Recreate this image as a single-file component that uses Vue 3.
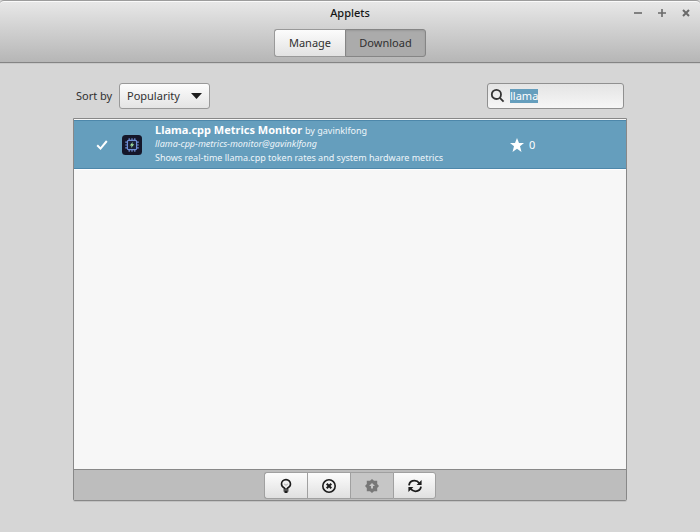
<script setup>
import { ref } from 'vue'

const tab = ref('Download')
const tabs = ['Manage', 'Download']
const sort = ref('Popularity')
const query = ref('llama')
const applets = [
  {
    name: 'Llama.cpp Metrics Monitor',
    author: 'gavinklfong',
    uuid: 'llama-cpp-metrics-monitor@gavinklfong',
    description: 'Shows real-time llama.cpp token rates and system hardware metrics',
    score: 0,
  },
]
</script>

<template>
  <div class="window">
    <header class="header">
      <div class="titlebar">
        <h1 class="title">Applets</h1>
        <div class="controls">
          <button class="control" aria-label="Minimize">
            <svg width="10" height="10" viewBox="0 0 10 10"><path d="M1 5h8" /></svg>
          </button>
          <button class="control" aria-label="Maximize">
            <svg width="10" height="10" viewBox="0 0 10 10"><path d="M1 5h8M5 1v8" /></svg>
          </button>
          <button class="control" aria-label="Close">
            <svg width="10" height="10" viewBox="0 0 10 10"><path class="thick" d="M2 2l6 6M8 2L2 8" /></svg>
          </button>
        </div>
      </div>
      <nav class="tabs">
        <button
          v-for="name in tabs"
          :key="name"
          class="tab"
          :class="{ active: tab === name }"
          @click="tab = name"
        >{{ name }}</button>
      </nav>
    </header>

    <main class="content">
      <div class="toolbar">
        <label class="sort-label" for="sort">Sort by</label>
        <div class="select-box">
          <select id="sort" v-model="sort" class="sort">
            <option>Popularity</option>
          </select>
          <svg class="caret" width="11" height="6" viewBox="0 0 11 6"><path d="M0 0h11L5.5 6z" /></svg>
        </div>
        <label class="search">
          <svg width="16" height="16" viewBox="0 0 16 16">
            <circle cx="6.4" cy="6.4" r="4.6" />
            <path d="M9.8 9.8l3.8 3.8" />
          </svg>
          <span class="field">
            <input v-model="query" class="query" type="text" aria-label="Search" />
          </span>
        </label>
      </div>

      <section class="panel">
        <ul class="list">
          <li v-for="applet in applets" :key="applet.uuid" class="row">
            <svg class="check" width="12" height="12" viewBox="0 0 12 12"><path d="M1.2 6.3l3.3 3.3L10.8 2" /></svg>
            <svg class="logo" width="20" height="20" viewBox="0 0 20 20">
              <rect width="20" height="20" rx="3.5" fill="#15172a" />
              <path
                d="M7.2 3.2v2.6M10 3.2v2.6M12.8 3.2v2.6M7.2 14.2v2.6M10 14.2v2.6M12.8 14.2v2.6M3.2 7.2h2.6M3.2 10h2.6M3.2 12.8h2.6M14.2 7.2h2.6M14.2 10h2.6M14.2 12.8h2.6"
                stroke="#6f8fd6"
                stroke-width="1.2"
              />
              <rect x="5.4" y="5.4" width="9.2" height="9.2" rx="1.2" fill="#1b2138" stroke="#6f8fd6" stroke-width="1.2" />
              <path d="M10.8 7L7.8 10.5h1.8L9.1 13l3.1-3.7h-1.9z" fill="#a4e6a2" />
            </svg>
            <div class="info">
              <div class="name"><strong>{{ applet.name }}</strong> <small>by {{ applet.author }}</small></div>
              <div class="uuid">{{ applet.uuid }}</div>
              <div class="description">{{ applet.description }}</div>
            </div>
            <div class="score">
              <svg width="16" height="16" viewBox="0 0 16 16">
                <path d="M8 1l2 5h5l-4 3.3L12.5 15 8 11.7 3.5 15 5 9.3 1 6h5z" />
              </svg>
              <span>{{ applet.score }}</span>
            </div>
          </li>
        </ul>
        <footer class="actions">
          <button class="action" aria-label="More info">
            <svg width="16" height="16" viewBox="0 0 16 16">
              <path
                d="M6.3 11V9.9C4.600 9.200 3.500 7.900 3.500 6.100a4.500 4.500 0 0 1 9 0c0 1.800-1.100 3.100-2.800 3.800V11z"
                fill="none"
                stroke="#1c1c1c"
                stroke-width="1.600"
              />
              <path d="M6.200 6l1.800 1.300L9.800 6" fill="none" stroke="#aaa" />
              <path d="M5.500 12.200h5v1.300h-1V15h-3v-1.500h-1z" fill="#1c1c1c" />
            </svg>
          </button>
          <button class="action" aria-label="Uninstall">
            <svg width="16" height="16" viewBox="0 0 16 16" fill="none" stroke="#1c1c1c">
              <circle cx="8" cy="8" r="6.200" stroke-width="1.600" />
              <path d="M5.700 5.700l4.600 4.600M10.300 5.700l-4.600 4.600" stroke-width="2" />
            </svg>
          </button>
          <button class="action" aria-label="Update" disabled>
            <svg width="16" height="16" viewBox="0 0 16 16">
              <path
                fill="#777"
                fill-rule="evenodd"
                d="M8 1l2 1.800h3.200V6L15 8l-1.800 2v3.200H10L8 15l-2-1.800H2.800V10L1 8l1.800-2V2.800H6zM8 5L5 8h2v2.600h2V8h2z"
              />
            </svg>
          </button>
          <button class="action" aria-label="Refresh">
            <svg width="16" height="16" viewBox="0 0 16 16">
              <path
                d="M2 7.300C2.400 4.400 4.800 2.700 7.600 2.700c2 0 3.600.9 4.700 2.500M14 8.700c-.4 2.900-2.800 4.600-5.600 4.600-2 0-3.600-.9-4.700-2.500"
                fill="none"
                stroke="#1c1c1c"
                stroke-width="1.800"
              />
              <path d="M14.600 2v5H9.600zM1.400 14V9h5z" fill="#1c1c1c" />
            </svg>
          </button>
        </footer>
      </section>
    </main>
  </div>
</template>

<style>
body {
  margin: 0;
  background: #d6d6d6;
}
</style>

<style scoped>
* {
  box-sizing: border-box;
}
.window {
  display: flex;
  flex-direction: column;
  min-height: 100vh;
  background: #d6d6d6;
  color: #303030;
  font-family: "Noto Sans", "Open Sans", sans-serif;
  font-size: 11px;
  line-height: 16px;
}
button,
select,
input {
  font: inherit;
  color: inherit;
  margin: 0;
}
svg {
  display: block;
  flex: none;
}
.header {
  padding-bottom: 5px;
  border-top: 1px solid #9c9c9c;
  border-bottom: 1px solid #848484;
  border-radius: 4px 4px 0 0;
  background: linear-gradient(#e8e8e8, #b6b6b6);
  box-shadow: inset 0 1px #fafafa, 0 1px #c8c8c8;
}
.titlebar {
  display: grid;
  grid-template-columns: 1fr auto 1fr;
  align-items: center;
  height: 24px;
  padding: 0 9px;
}
.title {
  grid-column: 2;
  margin: 0;
  font-size: 11px;
  font-weight: 500;
  color: #151515;
}
.controls {
  display: flex;
  justify-content: flex-end;
  gap: 14px;
}
.control {
  padding: 0;
  border: 0;
  background: none;
}
.control path {
  fill: none;
  stroke: #6a6a6a;
  stroke-width: 1.6;
}
.control .thick {
  stroke-width: 2;
}
.tabs {
  display: flex;
  justify-content: center;
  margin-top: 4px;
}
.tab {
  width: 81px;
  height: 28px;
  padding: 0;
  border: 1px solid #999;
  background: linear-gradient(#fcfcfc, #e2e2e2);
}
.tab:first-child {
  width: 71px;
  border-right: 0;
  border-radius: 3px 0 0 3px;
}
.tab:last-child {
  border-radius: 0 3px 3px 0;
}
.tab.active {
  border-color: #858585;
  background: #ababab;
  box-shadow: inset 0 1px 2px #999;
}
.content {
  display: flex;
  flex: 1;
  flex-direction: column;
  padding: 20px 73px 31px;
}
.toolbar {
  display: flex;
  align-items: center;
  padding: 0 3px;
  margin-bottom: 9px;
}
.sort-label {
  width: 43px;
  white-space: nowrap;
}
.select-box {
  display: grid;
  align-items: center;
  width: 91px;
}
.sort {
  grid-area: 1 / 1;
  height: 26px;
  padding: 0 7px;
  border: 1px solid #999;
  border-radius: 3px;
  background: linear-gradient(#fcfcfc, #e4e4e4);
  appearance: none;
}
.caret {
  grid-area: 1 / 1;
  justify-self: end;
  margin-right: 8px;
  fill: #1c1c1c;
  pointer-events: none;
}
.search {
  display: flex;
  align-items: center;
  gap: 4px;
  width: 137px;
  height: 26px;
  margin-left: auto;
  padding: 0 2px;
  border: 1px solid #909090;
  border-radius: 3px;
  background: linear-gradient(#e4e4e4, #f6f6f6);
}
.search svg {
  fill: none;
  stroke: #333;
  stroke-width: 1.8;
}
.field {
  flex: 1;
  min-width: 0;
}
.query {
  field-sizing: content;
  display: block;
  height: 14px;
  padding: 0;
  border: 0;
  outline: 0;
  background: #659ebd;
  color: #fff;
}
.panel {
  display: flex;
  flex: 1;
  flex-direction: column;
  border: 1px solid #888;
  border-radius: 0 0 2px 2px;
  background: #f7f7f7;
  box-shadow: 0 1px #c2c2c2;
}
.list {
  flex: 1;
  margin: 0;
  padding: 1px 0 0;
  list-style: none;
}
.row {
  display: flex;
  align-items: center;
  height: 49px;
  padding-left: 22px;
  border-top: 1px solid #4d87aa;
  border-bottom: 1px solid #4d87aa;
  background: #659ebd;
  box-shadow: 0 1px #fff;
  color: #fff;
}
.check {
  margin-right: 14px;
  fill: none;
  stroke: #fff;
  stroke-width: 2;
}
.logo {
  margin-right: 13px;
}
.info {
  flex: 1;
  line-height: 14px;
}
.name {
  font-size: 11px;
}
.name small,
.uuid,
.description {
  font-size: 9px;
  color: #eef5f9;
}
.uuid {
  line-height: 12px;
  font-style: italic;
}
.description {
  line-height: 16px;
}
.score {
  display: flex;
  align-items: center;
  gap: 4px;
  width: 117px;
}
.score svg {
  fill: #fff;
}
.actions {
  display: flex;
  justify-content: center;
  padding: 2px 0 1px;
  border-top: 1px solid #888;
  background: #bdbdbd;
}
.action {
  display: flex;
  align-items: center;
  justify-content: center;
  width: 43px;
  height: 27px;
  padding: 0;
  border: 1px solid #a0a0a0;
  border-right-width: 0;
  background: linear-gradient(#fcfcfc, #e0e0e0);
}
.action:first-child {
  border-radius: 3px 0 0 3px;
}
.action:last-child {
  border-right-width: 1px;
  border-radius: 0 3px 3px 0;
}
.action:disabled {
  background: #c6c6c6;
}
</style>
